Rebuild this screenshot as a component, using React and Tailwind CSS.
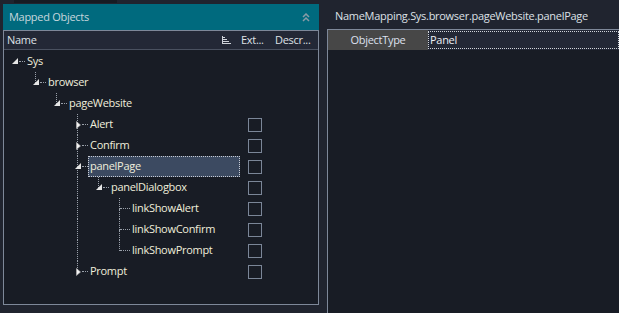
const rows = [
	{name: "Sys", level: 0, exp: "open", last: true},
	{name: "browser", level: 1, exp: "open", last: true},
	{name: "pageWebsite", level: 2, exp: "open", last: true},
	{name: "Alert", level: 3, exp: "closed", check: true},
	{name: "Confirm", level: 3, exp: "closed", check: true},
	{name: "panelPage", level: 3, exp: "open", check: true, selected: true},
	{name: "panelDialogbox", level: 4, exp: "open", check: true, last: true, rails: [3]},
	{name: "linkShowAlert", level: 5, check: true, rails: [3]},
	{name: "linkShowConfirm", level: 5, check: true, rails: [3]},
	{name: "linkShowPrompt", level: 5, check: true, last: true, rails: [3]},
	{name: "Prompt", level: 3, exp: "closed", check: true, last: true},
];

const dotLine = "border-[#9aa1ab] border-dotted";

function Expander({exp}) {
	if (exp === "open") {
		return (
			<svg className="absolute left-[6px] top-[7px]" width="7" height="7" viewBox="0 0 7 7">
				<polygon points="6,0 6,6 0,6" fill="#e6e6e6" />
			</svg>
		);
	}
	if (exp === "closed") {
		return (
			<svg className="absolute left-[7px] top-[7px]" width="5" height="8" viewBox="0 0 5 8">
				<polygon points="0.5,0.5 4.5,4 0.5,7.5" fill="#f2f2f2" stroke="#b8b8b8" strokeWidth="0.6" />
			</svg>
		);
	}
	return null;
}

function TreeRow({row}) {
	const cols = Array.from({length: row.level}, (_, i) => i);
	return (
		<div className="flex h-[21px] items-stretch">
			<div className="flex w-[236px] pl-[2px]">
				{cols.map(c => (
					<div key={c} className="relative w-[21px] shrink-0">
						{row.rails?.includes(c) && c > 0 && (
							<div className={`absolute left-[8px] top-0 h-full border-l ${dotLine}`} />
						)}
					</div>
				))}
				<div className="relative w-[19px] shrink-0">
					{row.level > 0 && (
						<div className={`absolute left-[8px] top-0 h-[11px] border-l ${dotLine}`} />
					)}
					{row.level > 0 && !row.last && (
						<div className={`absolute left-[8px] top-[11px] bottom-0 border-l ${dotLine}`} />
					)}
					<div className={`absolute ${row.exp ? "left-[13px]" : "left-[9px]"} right-0 top-[10px] border-t ${dotLine}`} />
					<Expander exp={row.exp} />
				</div>
				<div
					className={`flex items-center pl-[1px] ${row.selected ? "flex-1 border border-dotted border-[#c8ccd4] bg-[#3c4a61]" : "border border-transparent"}`}
				>
					<span className="text-[#efeedc]">{row.name}</span>
				</div>
			</div>
			<div className="flex w-[32px] items-center pl-[8px]">
				{row.check && <div className="h-[14px] w-[14px] border border-[#7b8698]" />}
			</div>
		</div>
	);
}

function SortIcon() {
	return (
		<svg width="9" height="8" viewBox="0 0 9 8" className="mr-[9px]">
			<rect x="0" y="0" width="1" height="8" fill="#cfd3da" />
			<rect x="1" y="1" width="2" height="1" fill="#cfd3da" />
			<rect x="1" y="3" width="4" height="1" fill="#cfd3da" />
			<rect x="1" y="5" width="6" height="1" fill="#cfd3da" />
			<rect x="0" y="7" width="9" height="1" fill="#cfd3da" />
		</svg>
	);
}

export default function App() {
	return (
		<div
			className="relative h-[313px] w-[619px] overflow-hidden bg-[#20242f] text-[11px] tracking-[-0.29px]"
			style={{fontFamily: '"Open Sans", "Noto Sans", sans-serif'}}
		>
			<div className="ml-[14px] h-[3px] w-[103px] bg-[#171b23]" />
			<div className="flex">
				{/* left panel */}
				<div className="ml-[3px] mt-[1px] flex w-[316px] flex-col">
					<div className="flex h-[26px] items-center justify-between bg-[#006a7e] pl-[6px] pr-[9px]">
						<span className="text-[#c7d7dd]">Mapped Objects</span>
						<svg width="8" height="9" viewBox="0 0 8 9">
							<polyline points="1,4 4,1 7,4" fill="none" stroke="#8a9ba6" strokeWidth="1.5" />
							<polyline points="1,8 4,5 7,8" fill="none" stroke="#8a9ba6" strokeWidth="1.5" />
						</svg>
					</div>
					<div className="flex h-[275px] flex-col border border-[#7e8899] bg-[#181c25]">
						<div className="flex h-[19px] shrink-0 items-center border-b border-[#4a5160] bg-[#232836] text-[#dfe1e6]">
							<div className="flex w-[236px] items-center justify-between pl-[3px]">
								<span>Name</span>
								<SortIcon />
							</div>
							<div className="w-[34px] pl-[1px]">Ext...</div>
							<div className="flex-1 pl-[1px]">Descr...</div>
						</div>
						<div className="pt-[1px]">
							{rows.map(r => (
								<TreeRow key={r.name} row={r} />
							))}
						</div>
					</div>
				</div>
				{/* right panel */}
				<div className="ml-[8px] flex flex-1 flex-col">
					<div className="flex h-[26px] items-center pl-[8px] text-[#dde0e6]">
						NameMapping.Sys.browser.pageWebsite.panelPage
					</div>
					<div className="flex h-[284px] flex-col border-l border-t border-[#7e8899] bg-[#181c25]">
						<div className="flex h-[20px] shrink-0 bg-[#232836]">
							<div className="flex w-[100px] items-center justify-center bg-[#474747] text-[#dde0ee]">
								ObjectType
							</div>
							<div className="my-[1px] flex flex-1 items-center border border-dotted border-[#d0d4da] pl-[1px] text-[#eceff4]">
								Panel
							</div>
						</div>
					</div>
				</div>
			</div>
		</div>
	);
}
